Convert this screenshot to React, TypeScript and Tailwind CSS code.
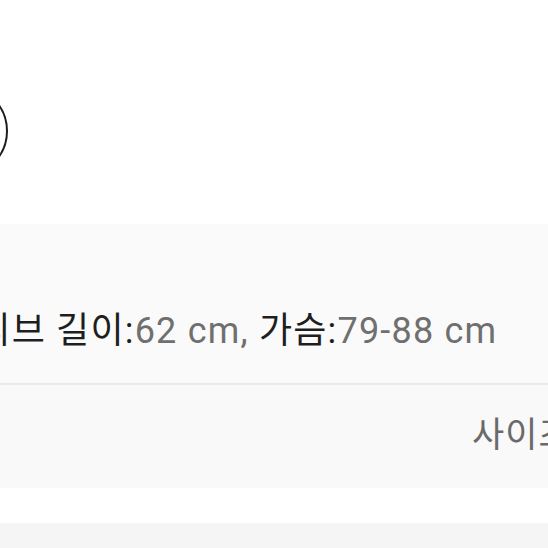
import React from "react";

const font = { fontFamily: '"Roboto", "Noto Sans CJK KR", sans-serif' };

export default function App() {
  return (
    <div className="w-[548px] h-[548px] overflow-hidden bg-white" style={font}>
      {/* top area with radio-like circle */}
      <div className="h-[224px] pt-[85px]">
        <div className="ml-[-84px] w-[92px] h-[92px] rounded-full border-[2.5px] border-[#1c1c1c]" />
      </div>

      {/* size info */}
      <div className="h-[159px] bg-[#fafafa] flex items-end pb-[32px]">
        <p className="ml-[-57px] whitespace-nowrap text-[36px] leading-[40px] tracking-[1.2px] text-[#1e1e1e]">
          슬리브 길이:<span className="text-[#6f6f6f]">62 cm, </span>
          가슴:<span className="text-[#6f6f6f]">79-88 cm</span>
        </p>
      </div>
      <div className="h-[2px] bg-[#e9e9e9]" />

      {/* size guide row */}
      <div className="h-[103px] bg-[#f9f9f9] flex items-center pl-[472px] pb-[2px]">
        <span className="whitespace-nowrap text-[35px] leading-[40px] tracking-[1px] text-[#6a6a6a]">사이즈 가이드</span>
      </div>

      <div className="h-[35px] bg-white" />
      <div className="h-[25px] bg-[#f5f5f5]" />
    </div>
  );
}
